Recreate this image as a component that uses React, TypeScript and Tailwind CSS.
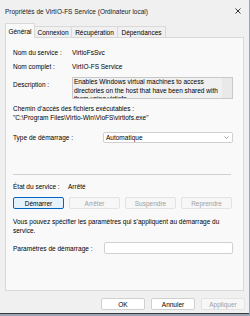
const font = { fontFamily: '"Liberation Sans", Arial, sans-serif' };

const Row = ({ label, children }: { label: string; children: React.ReactNode }) => (
  <div className="flex h-[10px] items-center">
    <span className="w-[59px] shrink-0">{label}</span>
    <span>{children}</span>
  </div>
);

const Btn = ({ children, disabled, primary, w = "w-[51px]" }: { children: React.ReactNode; disabled?: boolean; primary?: boolean; w?: string }) => (
  <div
    className={`${w} h-[12px] flex items-center justify-center rounded-[2px] border ${
      primary
        ? "border-[#0067c0] bg-[#e5f1fb] text-black"
        : disabled
        ? "border-[#e3e3e3] bg-[#f7f7f7] text-[#a0a0a0]"
        : "border-[#d0d0d0] bg-white text-black"
    }`}
  >
    {children}
  </div>
);

const exePath = '"C:\\Program Files\\Virtio-Win\\VioFS\\virtiofs.exe"';

export default function App() {
  return (
    <div className="w-[250px] h-[316px] bg-[#9aa6b6] overflow-hidden text-[6.5px] leading-[9px] text-black" style={font}>
      <div className="w-[249px] h-[314px] bg-[#f0f0f0] border-b border-[#3a3a3a] flex flex-col">
        {/* Title bar */}
        <div className="h-[22px] flex items-center justify-between pl-[5px] pr-[8px] shrink-0">
          <span className="text-[#1a1a1a]">Propriétés de VirtIO-FS Service (Ordinateur local)</span>
          <svg width="6" height="6" viewBox="0 0 6 6" className="mt-[-1px]">
            <path d="M0.5 0.5L5.5 5.5M5.5 0.5L0.5 5.5" stroke="#222" strokeWidth="0.9" />
          </svg>
        </div>

        {/* Tabs */}
        <div className="flex items-end h-[15px] pl-[5px] shrink-0 relative z-10">
          <div className="h-[15px] w-[30px] flex items-center justify-center bg-[#f9f9f9] border border-b-0 border-[#d9d9d9] mb-[-1px]">
            Général
          </div>
          <div className="h-[11px] w-[37px] flex items-center justify-center border-t border-r border-[#d9d9d9]">Connexion</div>
          <div className="h-[11px] w-[46px] flex items-center justify-center border-t border-r border-[#d9d9d9]">Récupération</div>
          <div className="h-[11px] w-[48px] flex items-center justify-center border-t border-r border-[#d9d9d9]">Dépendances</div>
        </div>

        {/* Panel */}
        <div className="mx-[5px] h-[254px] shrink-0 border border-[#d9d9d9] bg-[#f9f9f9] pl-[7px] pr-[10px] pt-[9px]">
          <Row label="Nom du service :">VirtioFsSvc</Row>
          <div className="mt-[4px]">
            <Row label="Nom complet :">VirtIO-FS Service</Row>
          </div>

          <div className="flex mt-[6px]">
            <span className="w-[59px] shrink-0 mt-[3px]">Description :</span>
            <div className="flex-1 h-[22px] border border-[#c9c9c9] bg-[#f0f0f0] flex overflow-hidden">
              <div className="flex-1 pl-[1px] leading-[8.5px]">
                Enables Windows virtual machines to access directories on the host that have been shared with them using virtiofs.
              </div>
              <div className="w-[10px] bg-[#e9e9e9] shrink-0" />
            </div>
          </div>

          <div className="mt-[5px]">Chemin d’accès des fichiers exécutables :</div>
          <div>{exePath}</div>

          <div className="flex items-center mt-[10px]">
            <span className="w-[90px] shrink-0">Type de démarrage :</span>
            <div className="flex-1 h-[11px] border border-[#d0d0d0] bg-white rounded-[2px] flex items-center justify-between pl-[2px] pr-[3px]">
              <span>Automatique</span>
              <svg width="5" height="3" viewBox="0 0 5 3">
                <path d="M0.5 0.5L2.5 2.5L4.5 0.5" stroke="#666" strokeWidth="0.6" fill="none" />
              </svg>
            </div>
          </div>

          <div className="mt-[31px] mr-[2px] border-t border-[#d0d0d0]" />

          <div className="flex h-[10px] items-center mt-[6px]">
            <span className="w-[55px] shrink-0">État du service :</span>
            <span>Arrêté</span>
          </div>

          <div className="flex gap-[5px] mt-[6px]">
            <Btn primary>Démarrer</Btn>
            <Btn disabled>Arrêter</Btn>
            <Btn disabled>Suspendre</Btn>
            <Btn disabled>Reprendre</Btn>
          </div>

          <div className="mt-[8px] pr-[4px]">
            Vous pouvez spécifier les paramètres qui s’appliquent au démarrage du service.
          </div>

          <div className="flex items-center mt-[7px]">
            <span className="w-[91px] shrink-0">Paramètres de démarrage :</span>
            <div className="flex-1 h-[12px] border border-[#d0d0d0] bg-white rounded-[2px]" />
          </div>
        </div>

        {/* Footer */}
        <div className="flex justify-end gap-[6px] pr-[4px] mt-[7px]">
          <Btn w="w-[44px]">OK</Btn>
          <Btn w="w-[44px]">Annuler</Btn>
          <Btn w="w-[44px]" disabled>Appliquer</Btn>
        </div>
      </div>
    </div>
  );
}
